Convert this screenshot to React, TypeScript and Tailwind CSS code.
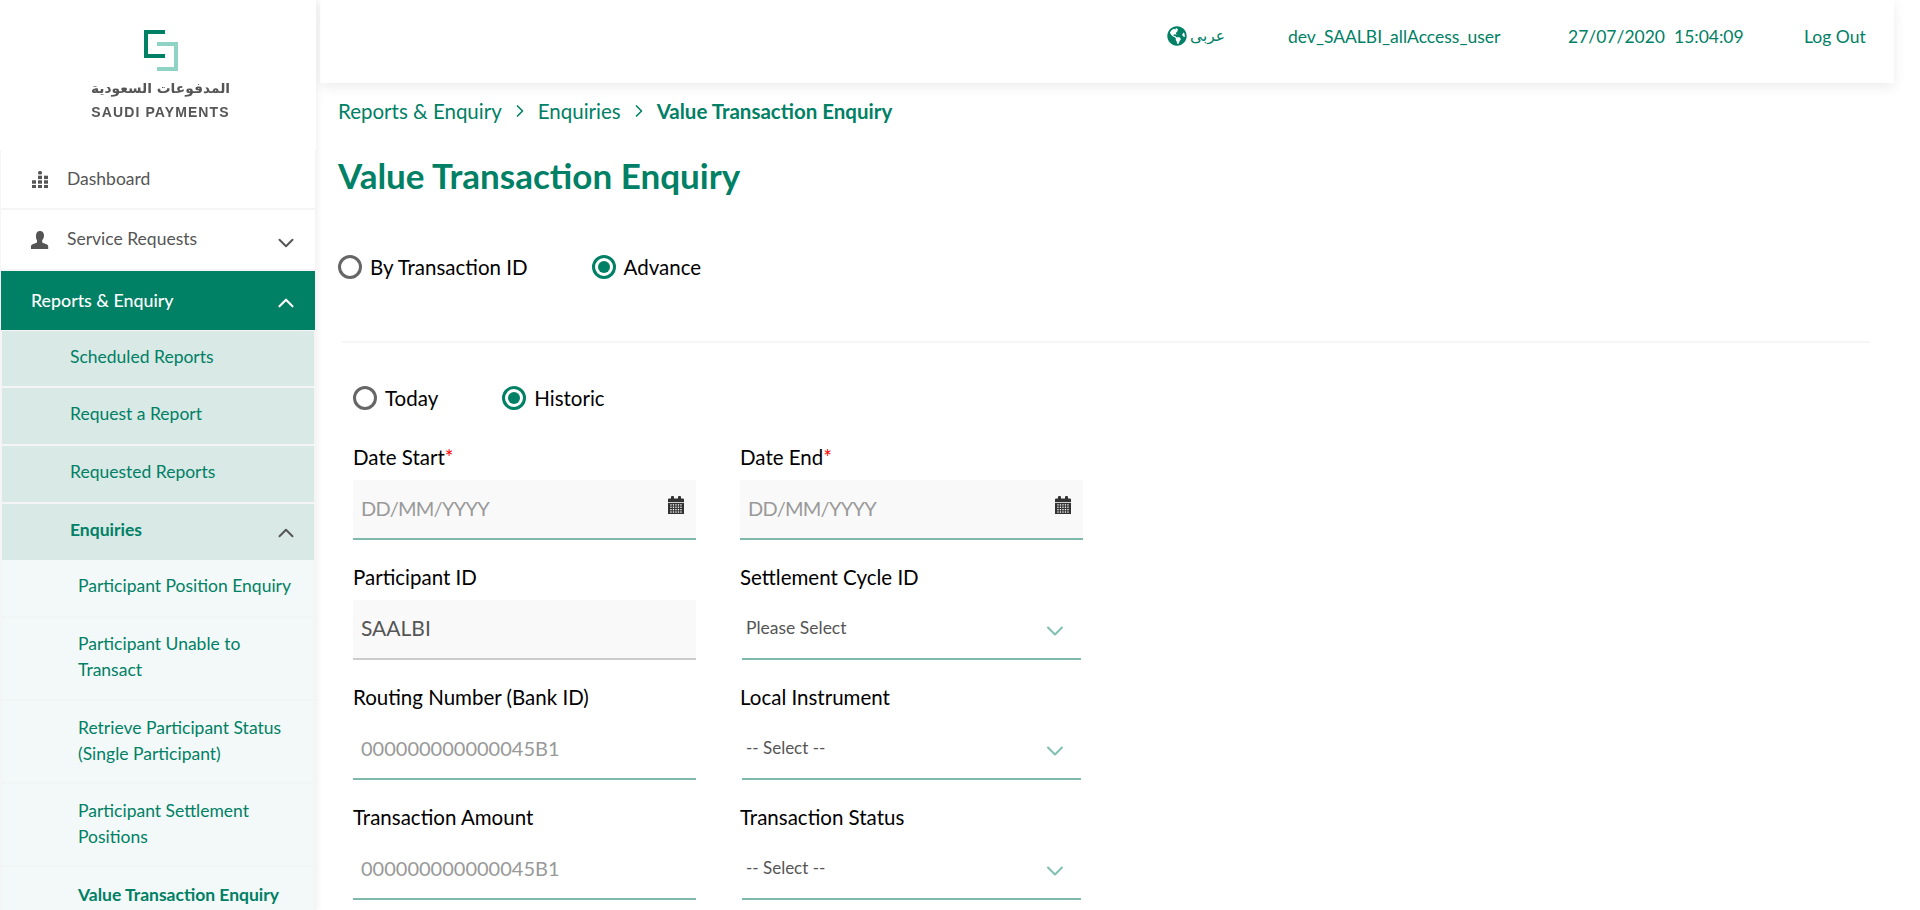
import type { ReactNode } from "react";
import { ChevronDown, ChevronUp, ChevronRight } from "lucide-react";
import { FaGlobeAmericas } from "react-icons/fa";

const font = "font-['Lato','Noto_Sans',sans-serif]";

function Logo() {
  return (
    <div className="h-[150px] flex flex-col items-center pt-[30px] pl-[5px] blur-[0.4px]">
      <svg width="34" height="42" viewBox="0 0 34 42" fill="none">
        <path d="M21 2H2V26H21" stroke="#008065" strokeWidth="4" />
        <path d="M13 14H32V39H13" stroke="#8fd3c5" strokeWidth="4" />
      </svg>
      <div className="mt-[7px] h-[19px] text-[13.800px] leading-[19px] font-bold text-[#555] font-['DejaVu_Sans',sans-serif] whitespace-nowrap" dir="rtl">المدفوعات السعودية</div>
      <div className="mt-[7px] text-[14px] leading-[15px] font-bold tracking-[1.100px] text-[#555] font-['Liberation_Sans',sans-serif] whitespace-nowrap">SAUDI PAYMENTS</div>
    </div>
  );
}

function DashIcon() {
  const cells = [
    [6, 0], [6, 4.700], [12, 4.700],
    [0, 9.300], [6, 9.300], [12, 9.300],
    [0, 14], [6, 14], [12, 14],
  ];
  return (
    <svg width="16" height="17" viewBox="0 0 16 17" fill="#555">
      {cells.map(([x, y]) => (
        <rect key={`${x}-${y}`} x={x} y={y} width="4" height="3.400" rx={y === 0 ? 1.500 : 0} />
      ))}
    </svg>
  );
}

function PersonIcon() {
  return (
    <svg width="18" height="18" viewBox="0 0 18 18" fill="#555">
      <path d="M9 0c2.600 0 4 1.900 4 4.600 0 2-.8 3.700-1.800 4.700v1.600c0 .7 1.200 1.100 3 1.800 1.900.7 3 1.400 3 2.300V18H0v-3c0-.9 1.100-1.600 3-2.300 1.800-.7 3-1.100 3-1.800V9.300C5 8.300 5 6.600 5 4.600 5 1.900 6.400 0 9 0z" />
    </svg>
  );
}

function CalIcon() {
  return (
    <svg width="16" height="18" viewBox="0 0 16 18" className="shrink-0">
      <path d="M0 3.500a1 1 0 0 1 1-1h2V1a1 1 0 0 1 1-1h1a1 1 0 0 1 1 1v1.500h4V1a1 1 0 0 1 1-1h1a1 1 0 0 1 1 1v1.500h2a1 1 0 0 1 1 1V6H0z" fill="#333" />
      <rect x="0" y="6.800" width="16" height="11.200" fill="#333" />
      {[0, 1, 2, 3].map((r) =>
        [0, 1, 2, 3, 4].map((c) => (
          <rect key={`${r}${c}`} x={2.300 + c * 2.500} y={8.200 + r * 2.400} width="1.300" height="1.300" fill="#fff" />
        ))
      )}
    </svg>
  );
}

function Radio({ label, on }: { label: string; on?: boolean }) {
  return (
    <div className="flex items-center gap-2">
      <span className={`w-6 h-6 rounded-full border-[3px] flex items-center justify-center bg-white ${on ? "border-[#008065]" : "border-[#666]"}`}>
        {on && <span className="w-3 h-3 rounded-full bg-[#008065]" />}
      </span>
      <span className="text-[20.500px] leading-6 text-black">{label}</span>
    </div>
  );
}

function Label({ text, req }: { text: string; req?: boolean }) {
  return (
    <div className="h-[35px] text-[20.500px] leading-[24px] text-black whitespace-nowrap">
      {text}
      {req && <span className="text-[#ff0000]">*</span>}
    </div>
  );
}

function DateField({ label }: { label: string }) {
  return (
    <div>
      <Label text={label} req />
      <div className="h-[60px] bg-[#f9f9f9] border-b-2 border-[#7fb9ae] flex items-start justify-between pl-2 pr-[12px]">
        <span className="mt-[13px] text-[20px] tracking-[-0.75px] leading-[30px] text-[#999]">DD/MM/YYYY</span>
        <span className="mt-[16px]"><CalIcon /></span>
      </div>
    </div>
  );
}

function TextField({ label, value, disabled }: { label: string; value: string; disabled?: boolean }) {
  return (
    <div>
      <Label text={label} />
      <div className={`h-[60px] border-b-2 pl-2 pt-[13px] leading-[30px] ${disabled ? "text-[21px] bg-[#f9f9f9] border-[#ccc] text-[#555]" : "text-[20px] border-[#7fb9ae] text-[#999]"}`}>
        {value}
      </div>
    </div>
  );
}

function SelectField({ label, value, small }: { label: string; value: string; small?: boolean }) {
  return (
    <div>
      <Label text={label} />
      <div className="h-[60px] mx-[2px] border-b-2 border-[#7fb9ae] flex items-start justify-between pl-[4px] pr-[12px] pt-[15px]">
        <span className={`${small ? "text-[17px]" : "text-[17.500px]"} leading-[26px] text-[#555]`}>{value}</span>
        <ChevronDown size={28} strokeWidth={1.700} className="text-[#7fbfb2] mt-[2px]" />
      </div>
    </div>
  );
}

function NavTop({ label, icon, chevron, h }: { label: string; icon: ReactNode; chevron?: boolean; h: string }) {
  return (
    <div className={`${h} bg-white mx-px flex items-center pl-[30px] pr-[16px] text-[17.500px] text-[#555]`}>
      <span className="w-[18px] flex justify-center">{icon}</span>
      <span className="ml-[18px]">{label}</span>
      {chevron && <ChevronDown size={26} strokeWidth={1.800} className="ml-auto text-[#555] mt-[7px]" />}
    </div>
  );
}

function NavSub({ label, bold, chevron, h }: { label: string; bold?: boolean; chevron?: boolean; h: string }) {
  return (
    <div className={`${h} bg-[#d9e9e6] flex items-center pl-[68px] pr-[15px] text-[17.500px] text-[#008065] ${bold ? "font-bold" : ""}`}>
      <span className="mt-[-3px]">{label}</span>
      {chevron && <ChevronUp size={26} strokeWidth={1.800} className="ml-auto text-[#555] mt-[2px]" />}
    </div>
  );
}

function NavSubSub({ label, bold, box }: { label: string; bold?: boolean; box: string }) {
  return (
    <div className={`${box} pl-[76px] pr-[14px] text-[17.500px] leading-[26px] text-[#008065] border-b-[2px] border-[#f1f6f5] ${bold ? "font-bold" : ""}`}>
      {label}
    </div>
  );
}

export default function App() {
  return (
    <div className={`h-[910px] overflow-hidden flex bg-white ${font}`}>
      <aside className="w-[316px] shrink-0 h-full overflow-hidden bg-[#f5f5f5] shadow-[2px_0_6px_rgba(0,0,0,0.06)] z-10">
        <div className="bg-white"><Logo /></div>
        <div className="flex flex-col gap-[2px]">
          <NavTop h="h-[58px]" label="Dashboard" icon={<DashIcon />} />
          <NavTop h="h-[59px]" label="Service Requests" icon={<PersonIcon />} chevron />
          <div className="h-[59px] bg-[#008065] mx-px flex items-center pl-[30px] pr-[16px] text-[17.800px] text-white font-medium">
            <span>Reports &amp; Enquiry</span>
            <ChevronUp size={26} strokeWidth={2} className="ml-auto mt-[4px]" />
          </div>
        </div>
        <div className="mx-[2px] mt-px flex flex-col gap-[2px]">
          <NavSub h="h-[55px]" label="Scheduled Reports" />
          <NavSub h="h-[56px]" label="Request a Report" />
          <NavSub h="h-[56px]" label="Requested Reports" />
          <NavSub h="h-[56px]" label="Enquiries" bold chevron />
        </div>
        <div className="mx-[2px] bg-[#f3f9f8]">
          <NavSubSub label="Participant Position Enquiry" box="h-[58px] pt-[13px]" />
          <NavSubSub label="Participant Unable to Transact" box="h-[83px] pt-[13px]" />
          <NavSubSub label="Retrieve Participant Status (Single Participant)" box="h-[83px] pt-[14px]" />
          <NavSubSub label="Participant Settlement Positions" box="h-[83px] pt-[14px]" />
          <NavSubSub label="Value Transaction Enquiry" bold box="h-[60px] pt-[15px]" />
        </div>
      </aside>

      <main className="flex-1 min-w-0 pl-[4px]">
        <header className="w-[1574px] h-[83px] bg-white shadow-[0_4px_12px_rgba(0,0,0,0.08)] flex items-center text-[#008065] text-[17.500px] pb-[9px]">
          <div className="ml-[847px] flex items-center gap-[3px] w-[121px]">
            <FaGlobeAmericas size={20} className="mt-[-3px]" />
            <span className="text-[15.500px] font-['DejaVu_Sans',sans-serif]" dir="rtl">عربى</span>
          </div>
          <span className="whitespace-nowrap w-[280px]">dev_SAALBI_allAccess_user</span>
          <span className="whitespace-nowrap w-[236px]">27/07/2020&nbsp;&nbsp;15:04:09</span>
          <span className="whitespace-nowrap">Log Out</span>
        </header>

        <div className="pl-[18px] pr-[50px]">
          <nav className="mt-[13px] h-[30px] flex items-center text-[20.500px] text-[#008065] whitespace-nowrap">
            <span>Reports &amp; Enquiry</span>
            <ChevronRight size={20} strokeWidth={2} className="mx-[8px]" />
            <span>Enquiries</span>
            <ChevronRight size={20} strokeWidth={2} className="mx-[8px]" />
            <span className="font-bold">Value Transaction Enquiry</span>
          </nav>
          <h1 className="mt-[27px] text-[35px] leading-[44px] font-bold text-[#008065]">Value Transaction Enquiry</h1>
          <div className="mt-[58px] flex gap-[64px]">
            <Radio label="By Transaction ID" />
            <Radio label="Advance" on />
          </div>
          <div className="mt-[62px] h-[2px] ml-[4px] bg-[#f6f6f6]" />
          <div className="pl-[15px] pt-[43px]">
            <div className="flex gap-[64px]">
              <Radio label="Today" />
              <Radio label="Historic" on />
            </div>
            <div className="mt-[35px] grid grid-cols-[343px_343px] gap-x-[44px] gap-y-[25px]">
              <DateField label="Date Start" />
              <DateField label="Date End" />
              <TextField label="Participant ID" value="SAALBI" disabled />
              <SelectField label="Settlement Cycle ID" value="Please Select" />
              <TextField label="Routing Number (Bank ID)" value="000000000000045B1" />
              <SelectField label="Local Instrument" value="-- Select --" small />
              <TextField label="Transaction Amount" value="000000000000045B1" />
              <SelectField label="Transaction Status" value="-- Select --" small />
            </div>
          </div>
        </div>
      </main>
    </div>
  );
}
